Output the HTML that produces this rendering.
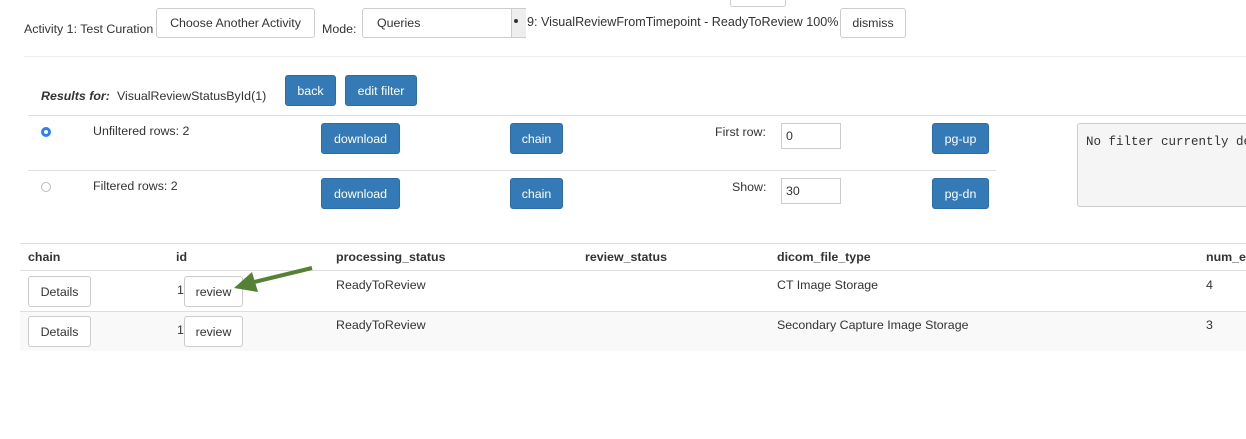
<!DOCTYPE html>
<html><head><style>
body{margin:0;width:1246px;height:439px;background:#fff;font-family:"Liberation Sans",Arial,sans-serif;font-size:12.4px;color:#333;position:relative;overflow:hidden}
.a{position:absolute;white-space:nowrap}
.btn{position:absolute;box-sizing:border-box;border:1px solid #ccc;border-radius:3px;background:#fff;color:#333;font-size:12.4px;display:flex;align-items:center;justify-content:center}
.p{background:#337ab7;border-color:#2e6da4;color:#fff}
.hr{position:absolute;height:1px;background:#ddd}
.in{position:absolute;box-sizing:border-box;border:1px solid #ccc;padding-left:4px;display:flex;align-items:center;font-size:12.4px}
</style></head><body>
<div class="btn" style="left:730px;top:-24px;width:56px;height:31px"></div>
<div class="a" style="left:24px;top:22px">Activity 1: Test Curation</div>
<div class="btn" style="left:156px;top:8px;width:159px;height:30px">Choose Another Activity</div>
<div class="a" style="left:322px;top:22px">Mode:</div>
<div class="btn" style="left:362px;top:8px;width:164px;height:30px;justify-content:flex-start;padding-left:14px;border-radius:3px 0 0 3px">Queries</div>
<div class="a" style="left:511px;top:9px;width:14px;height:28px;background:#eee;border-left:1px solid #ccc"></div>
<div class="a" style="left:514px;top:19px;width:4px;height:4px;border-radius:50%;background:#333"></div>
<div class="a" style="left:527px;top:15px;font-size:12.6px">9: VisualReviewFromTimepoint - ReadyToReview 100%</div>
<div class="btn" style="left:840px;top:8px;width:66px;height:30px">dismiss</div>
<div class="hr" style="left:24px;top:56px;width:1222px;background:#eee"></div>
<div class="a" style="left:41px;top:89px;font-weight:bold;font-style:italic">Results for:</div>
<div class="a" style="left:117px;top:89px">VisualReviewStatusById(1)</div>
<div class="btn p" style="left:285px;top:75px;width:51px;height:31px">back</div>
<div class="btn p" style="left:345px;top:75px;width:72px;height:31px">edit filter</div>
<div class="hr" style="left:28px;top:115px;width:1218px"></div>
<div class="hr" style="left:28px;top:170px;width:968px"></div>
<div class="a" style="left:41px;top:127px;width:10px;height:10px;border-radius:50%;background:#2f7ff5"><div style="position:absolute;left:3px;top:3px;width:4px;height:4px;border-radius:50%;background:#fff"></div></div>
<div class="a" style="left:41px;top:182px;width:8px;height:8px;border-radius:50%;border:1px solid #bbb"></div>
<div class="a" style="left:93px;top:124px">Unfiltered rows: 2</div>
<div class="a" style="left:93px;top:179px">Filtered rows: 2</div>
<div class="btn p" style="left:321px;top:123px;width:79px;height:31px">download</div>
<div class="btn p" style="left:321px;top:178px;width:79px;height:31px">download</div>
<div class="btn p" style="left:510px;top:123px;width:53px;height:31px">chain</div>
<div class="btn p" style="left:510px;top:178px;width:53px;height:31px">chain</div>
<div class="a" style="left:715px;top:125px">First row:</div>
<div class="a" style="left:732px;top:180px">Show:</div>
<div class="in" style="left:781px;top:123px;width:60px;height:26px">0</div>
<div class="in" style="left:781px;top:178px;width:60px;height:26px">30</div>
<div class="btn p" style="left:932px;top:123px;width:57px;height:31px">pg-up</div>
<div class="btn p" style="left:932px;top:178px;width:57px;height:31px">pg-dn</div>
<div class="a" style="left:1077px;top:123px;width:180px;height:84px;box-sizing:border-box;border:1px solid #ccc;border-radius:3px;background:#f5f5f5;font-family:'Liberation Mono',monospace;font-size:12.5px;padding:11px 8px">No filter currently defined</div>
<div class="a" style="left:20px;top:243px;width:1226px;height:108px;background:#fff;border-top:1px solid #ddd"></div>
<div class="hr" style="left:20px;top:270px;width:1226px"></div>
<div class="hr" style="left:20px;top:311px;width:1226px"></div>
<div class="a" style="left:20px;top:312px;width:1226px;height:39px;background:#f9f9f9"></div>
<div class="a" style="left:28px;top:250px;font-weight:bold">chain</div>
<div class="a" style="left:176px;top:250px;font-weight:bold">id</div>
<div class="a" style="left:336px;top:250px;font-weight:bold">processing_status</div>
<div class="a" style="left:585px;top:250px;font-weight:bold">review_status</div>
<div class="a" style="left:777px;top:250px;font-weight:bold">dicom_file_type</div>
<div class="a" style="left:1206px;top:250px;font-weight:bold">num_e</div>
<div class="btn" style="left:28px;top:276px;width:63px;height:31px">Details</div>
<div class="a" style="left:177px;top:283px">1</div>
<div class="btn" style="left:184px;top:276px;width:59px;height:31px">review</div>
<div class="a" style="left:336px;top:278px">ReadyToReview</div>
<div class="a" style="left:777px;top:278px">CT Image Storage</div>
<div class="a" style="left:1206px;top:278px">4</div>
<div class="btn" style="left:28px;top:316px;width:63px;height:31px">Details</div>
<div class="a" style="left:177px;top:323px">1</div>
<div class="btn" style="left:184px;top:316px;width:59px;height:31px">review</div>
<div class="a" style="left:336px;top:318px">ReadyToReview</div>
<div class="a" style="left:777px;top:318px">Secondary Capture Image Storage</div>
<div class="a" style="left:1206px;top:318px">3</div>
<svg class="a" style="left:0;top:0" width="1246" height="439"><line x1="312" y1="268" x2="250" y2="283" stroke="#548235" stroke-width="4"/><polygon points="234,288 252,272 258,292" fill="#548235"/></svg>
</body></html>
